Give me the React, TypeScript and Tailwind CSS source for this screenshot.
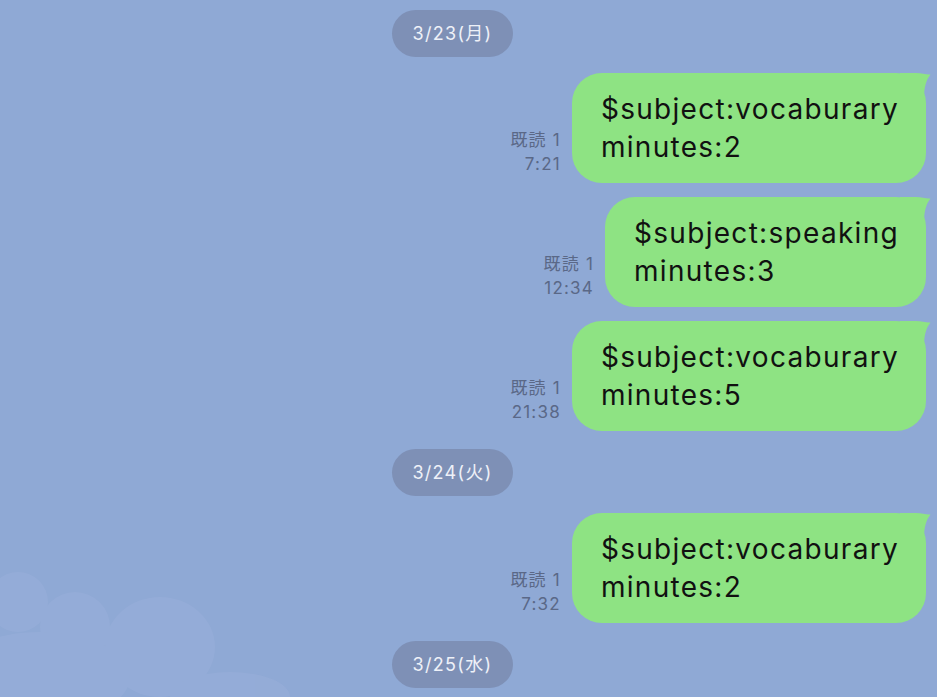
import React from "react";

type Message = {
  lines: string[];
  time: string;
};

function DatePill({ label }: { label: string }) {
  return (
    <div className="flex justify-center pr-[32px]">
      <div className="h-[47px] w-[121px] rounded-full bg-[#7e90b6] flex items-center justify-center text-[18px] tracking-[1.3px] text-[#eef1f8]">
        {label}
      </div>
    </div>
  );
}

function Bubble({ msg }: { msg: Message }) {
  return (
    <div className="flex justify-end items-end gap-[10px] pr-[11px]">
      <div className="flex flex-col items-end text-[17px] leading-[24px] tracking-[1.2px] text-[#5a6887] mb-[7px] mr-[1px]">
        <span>既読 1</span>
        <span>{msg.time}</span>
      </div>
      <div className="relative">
        <div className="relative z-10 rounded-[30px] bg-[#8ee383] pl-[29px] pr-[27px] py-[17px] text-[28px] leading-[38px] tracking-[1.3px] text-[#111]">
          {msg.lines.map((l) => (
            <div key={l}>{l}</div>
          ))}
        </div>
        <svg
          className="absolute z-20 top-0 right-[-6px]"
          width="32"
          height="28"
          viewBox="0 0 32 28"
        >
          <path
            d="M0 0 H16 C22 0 26 2 30.5 1.5 C28 5 24 10 24 27 H0 Z"
            fill="#8ee383"
          />
        </svg>
      </div>
    </div>
  );
}

export default function App() {
  return (
    <div
      className="relative w-[937px] h-[697px] overflow-hidden bg-[#8fa9d5]"
      style={{ fontFamily: 'Inter, "Noto Sans CJK JP", sans-serif' }}
    >
      <svg
        className="absolute left-0 bottom-0"
        width="300"
        height="140"
        viewBox="0 0 300 140"
      >
        <g fill="#a2b4df" opacity="0.3">
          <ellipse cx="18" cy="45" rx="30" ry="30" />
          <ellipse cx="75" cy="70" rx="35" ry="35" />
          <ellipse cx="160" cy="90" rx="55" ry="50" />
          <ellipse cx="40" cy="120" rx="90" ry="45" />
          <ellipse cx="230" cy="140" rx="60" ry="25" />
        </g>
      </svg>
      <div className="relative flex flex-col pt-[10px]">
        <DatePill label="3/23(月)" />
        <div className="h-[16px]" />
        <Bubble msg={{ lines: ["$subject:vocaburary", "minutes:2"], time: "7:21" }} />
        <div className="h-[14px]" />
        <Bubble msg={{ lines: ["$subject:speaking", "minutes:3"], time: "12:34" }} />
        <div className="h-[14px]" />
        <Bubble msg={{ lines: ["$subject:vocaburary", "minutes:5"], time: "21:38" }} />
        <div className="h-[18px]" />
        <DatePill label="3/24(火)" />
        <div className="h-[17px]" />
        <Bubble msg={{ lines: ["$subject:vocaburary", "minutes:2"], time: "7:32" }} />
        <div className="h-[18px]" />
        <DatePill label="3/25(水)" />
      </div>
    </div>
  );
}
